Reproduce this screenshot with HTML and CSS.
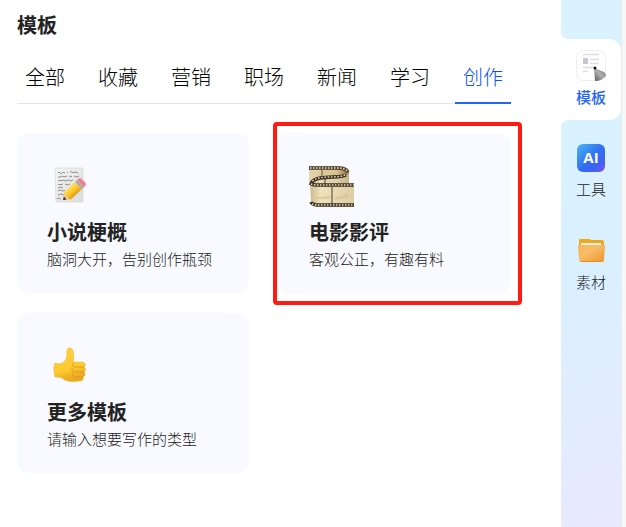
FILE: index.html
```html
<!DOCTYPE html>
<html lang="zh-CN">
<head>
    <meta charset="UTF-8">
    <meta name="viewport" content="width=device-width, initial-scale=1.0">
    <title>模板</title>
    <link rel="stylesheet" href="styles.css">
</head>
<body>
    <main class="panel">
        <h1 class="panel-title">模板</h1>

        <nav class="tabs">
            <button type="button" class="tab">全部</button>
            <button type="button" class="tab">收藏</button>
            <button type="button" class="tab">营销</button>
            <button type="button" class="tab">职场</button>
            <button type="button" class="tab">新闻</button>
            <button type="button" class="tab">学习</button>
            <button type="button" class="tab active">创作</button>
        </nav>

        <div class="card-grid">
            <a href="#novel" class="card">
                <svg class="card-icon" viewBox="0 0 46 46">
                    <defs>
                        <linearGradient id="paper" x1="0" y1="0" x2="1" y2="1">
                            <stop offset="0" stop-color="#f4f4f2"/>
                            <stop offset="1" stop-color="#dcdddd"/>
                        </linearGradient>
                        <linearGradient id="pencil" x1="0" y1="0" x2="0" y2="1">
                            <stop offset="0" stop-color="#ffe05a"/>
                            <stop offset="0.5" stop-color="#fcc62c"/>
                            <stop offset="1" stop-color="#e09a15"/>
                        </linearGradient>
                    </defs>
                    <path d="M8 5h28v34H9z" fill="url(#paper)" stroke="#d3d4d5" stroke-width=".6"/>
                    <g fill="none" stroke="#777" stroke-width=".8">
                        <path d="M11 10q1-2 2 0t3-1l2 1M20 9l1 1M23 9q2-1 3 1l2-1 3 1"/>
                        <path d="M11 14h3l1-1 2 1 3-1M22 14l2-1 1 1M27 13l2 1 3-1"/>
                        <path d="M11 18l2-1 1 1 3-1 1 1 4-1 2 1 2-1"/>
                        <path d="M11 22q1-2 2 0l3-1M18 21l3 1 2-1"/>
                        <path d="M11 25l3-1 2 1M11 28l2-1 3 1 2-1M11 32l3-1 3 1M10 36l2-1 2 1"/>
                    </g>
                    <g transform="translate(16 37) rotate(-43)">
                        <path d="M0 0L6-5V5z" fill="#f2c58c"/>
                        <path d="M0 0l3-2v4z" fill="#333"/>
                        <path d="M6-5h15V5H6l-1-3 1-2-1-2z" fill="url(#pencil)"/>
                        <path d="M21-5h3V5h-3z" fill="#a9adb3"/>
                        <path d="M24-5h1q3 0 3 3v4q0 3-3 3h-1z" fill="#ed7f88"/>
                    </g>
                </svg>
                <h2 class="card-title">小说梗概</h2>
                <p class="card-desc">脑洞大开，告别创作瓶颈</p>
            </a>
            <a href="#movie" class="card highlighted">
                <svg class="card-icon" viewBox="0 0 46 46">
                    <defs>
                        <linearGradient id="film" x1="0" y1="0" x2="1" y2="0">
                            <stop offset="0" stop-color="#cdb98a"/>
                            <stop offset="0.25" stop-color="#efe2be"/>
                            <stop offset="1" stop-color="#decea5"/>
                        </linearGradient>
                        <linearGradient id="filmBack" x1="0" y1="0" x2="1" y2="0">
                            <stop offset="0" stop-color="#e3d5ae"/>
                            <stop offset="0.7" stop-color="#d6c08e"/>
                            <stop offset="1" stop-color="#8f713f"/>
                        </linearGradient>
                    </defs>
                    <!-- far strip -->
                    <path d="M0 3h29c8 0 11 3 11 6v14H4L0 20z" fill="url(#filmBack)"/>
                    <path d="M13 7v8" stroke="#66543a" stroke-width="1"/>
                    <path d="M0 5h28c5 0 9 1 11 4" fill="none" stroke="#4a3c2b" stroke-width="3.500"/>
                    <path d="M1 5h27c5 0 9 1 11 4" fill="none" stroke="#eadfc2" stroke-width="1.6" stroke-dasharray="1.6 1.4"/>
                    <!-- middle fold -->
                    <path d="M38 12c-6 3-16 1-27 3-6 1-9 3-9 6h38V10z" fill="url(#film)" opacity=".7"/>
                    <path d="M16 16v5" stroke="#4d3f29" stroke-width="1"/>
                    <path d="M37 12c-6 3-16 1-26 3-6 1-8 3-9 6" fill="none" stroke="#3b3023" stroke-width="3.500"/>
                    <path d="M36 12c-6 3-16 1-26 3-5 1-7 3-8 5" fill="none" stroke="#e6dabb" stroke-width="1.4" stroke-dasharray="1.6 1.6"/>
                    <!-- near strip -->
                    <path d="M1 20q2 2 8 2h36v22H10q-8 0-8-6z" fill="url(#film)"/>
                    <path d="M7 34q9 0 14-2v4H8zM26 34q8-1 13-4v5l-13 2z" fill="#cdbb90" opacity=".5"/>
                    <path d="M23 24v17" stroke="#4d3f29" stroke-width="1"/>
                    <path d="M1 20q2 2 8 2h36M2 39q1 3 8 3h35" fill="none" stroke="#3b3023" stroke-width="3.500"/>
                    <path d="M2 21q2 1 7 1h36M3 41q2 1 7 1h35" fill="none" stroke="#eadfc2" stroke-width="1.6" stroke-dasharray="1.6 1.4"/>
                </svg>
                <h2 class="card-title">电影影评</h2>
                <p class="card-desc">客观公正，有趣有料</p>
            </a>
            <a href="#more" class="card">
                <svg class="card-icon" viewBox="0 0 46 46">
                    <defs>
                        <linearGradient id="thumb" x1="0" y1="0" x2="0.3" y2="1">
                            <stop offset="0" stop-color="#ffd245"/>
                            <stop offset="0.7" stop-color="#fdc92f"/>
                            <stop offset="1" stop-color="#eba91f"/>
                        </linearGradient>
                    </defs>
                    <path d="M8 20c5 2 9 0 11-4 2-3 0-7 1-9 1-3 5-3 6 1 1 3 1 7 0 11h9c4 0 4 4 2 5 2 1 2 4 0 5 2 2 1 4-1 5 1 3-1 4-4 4-7 1-13 1-17-3-2-1-4-1-7-1-1-4-2-10 0-14z" fill="url(#thumb)" stroke="#edb02a" stroke-width=".5"/>
                    <path d="M37 24h-9c-3 0-3-2-2-4M37 29h-9c-3 0-3-2-3-4M36 34h-8c-2 0-3-2-2-4" fill="none" stroke="#e09a20" stroke-width="1"/>
                </svg>
                <h2 class="card-title">更多模板</h2>
                <p class="card-desc">请输入想要写作的类型</p>
            </a>
        </div>
    </main>

    <aside class="sidebar">
        <a href="#template" class="side-item active">
            <svg class="side-icon" viewBox="0 0 30 30">
                <defs>
                    <linearGradient id="pen" x1="0" y1="1" x2="1" y2="0">
                        <stop offset="0" stop-color="#555"/>
                        <stop offset="0.5" stop-color="#b0b0b0"/>
                        <stop offset="1" stop-color="#666"/>
                    </linearGradient>
                </defs>
                <rect x=".5" y=".5" width="29" height="30" rx="7" fill="#fff" stroke="#eee"/>
                <path d="M7 4.500h16M14 9.500h9M14 13.500h9M7 17.500h11M7 21.500h5" stroke="#dcdde1" stroke-width="1.500"/>
                <path d="M7 8h5v6H7z" fill="#c8c9cf"/>
                <path d="M18 18l10 4q2 2 2 4-4 5-11 5z" fill="url(#pen)"/>
                <circle cx="19" cy="18" r="1.500" fill="#111"/>
            </svg>
            <span class="side-label">模板</span>
        </a>
        <a href="#tools" class="side-item">
            <svg class="side-icon" viewBox="0 0 30 30">
                <defs>
                    <linearGradient id="ai" x1="0" y1="0" x2="1" y2="1">
                        <stop offset="0" stop-color="#48b9ee"/>
                        <stop offset="0.5" stop-color="#316ff3"/>
                        <stop offset="0.75" stop-color="#3d61f3"/>
                        <stop offset="1" stop-color="#8551ef"/>
                    </linearGradient>
                </defs>
                <rect x="1" y="1" width="28" height="28" rx="6" fill="url(#ai)"/>
                <text class="ai-text" x="15" y="20" text-anchor="middle">AI</text>
            </svg>
            <span class="side-label">工具</span>
        </a>
        <a href="#materials" class="side-item">
            <svg class="side-icon" viewBox="0 0 30 30">
                <defs>
                    <linearGradient id="folder" x1="0" y1="0" x2="1" y2="1">
                        <stop offset="0" stop-color="#f5b757"/>
                        <stop offset="0.4" stop-color="#f7bd68"/>
                        <stop offset="1" stop-color="#ee9428"/>
                    </linearGradient>
                </defs>
                <path d="M3 4q0-1 1-1h9q1 0 2 1h11q2 0 2 2v8H3z" fill="#efaa13"/>
                <path d="M5 7h20v6H5z" fill="#f7f7f7"/>
                <path d="M5 8h19" stroke="#dce2e8"/>
                <path d="M2 9h26q1 0 1 1l-1 14q0 2-2 2H5q-2 0-2-2L2 10z" fill="url(#folder)"/>
                <path d="M5 25.500h20" stroke="#e58e20"/>
            </svg>
            <span class="side-label">素材</span>
        </a>
    </aside>
</body>
</html>
```

FILE: styles.css
```css
:root {
    --primary-color: #1f66ff;
    --mark-color: #ff1a12;
    --card-color: #f9faff;
    --text-color: #222;
}

* {
    box-sizing: border-box;
    margin: 0;
    padding: 0;
}

body {
    display: flex;
    min-height: 100vh;
    font-family: 'Noto Sans CJK SC', sans-serif;
    background-color: white;
    color: var(--text-color);
}

a {
    color: inherit;
    text-decoration: none;
}

.panel {
    flex: 1;
    padding: 10px 50px 20px 17px;
}

.panel-title {
    font-size: 20px;
    line-height: 30px;
    font-weight: 700;
}

.tabs {
    display: flex;
    justify-content: space-between;
    margin-top: 10px;
    border-bottom: 1px solid #e3e5eb;
}

.tab {
    height: 54px;
    padding: 0 8px;
    margin-bottom: -1px;
    border: none;
    border-bottom: 2px solid transparent;
    background: none;
    font-family: inherit;
    font-size: 20px;
    font-weight: 300;
    color: #000;
    cursor: pointer;
}

.tab.active {
    color: #0a50ff;
    border-bottom-color: var(--primary-color);
}

.card-grid {
    display: grid;
    grid-template-columns: 1fr 1fr;
    gap: 20px 30px;
    margin-top: 29px;
}

.card {
    position: relative;
    height: 160px;
    padding: 30px;
    border-radius: 12px;
    background-color: var(--card-color);
}

.card-icon {
    display: block;
    width: 46px;
    height: 46px;
}

.card-title {
    margin-top: 8px;
    font-size: 20px;
    line-height: 30px;
    font-weight: 700;
}

.card-desc {
    font-size: 15px;
    line-height: 24px;
    font-weight: 300;
    color: #222;
    white-space: nowrap;
}

/* red frame around the marked card */
.card.highlighted::after {
    content: '';
    position: absolute;
    inset: -11px -11px -12px -6px;
    border: 4px solid var(--mark-color);
    border-radius: 4px;
}

.sidebar {
    display: flex;
    flex-direction: column;
    gap: 12px;
    width: 65px;
    padding-top: 39px;
    border-right: 4px solid #f7f7f7;
    background: linear-gradient(160deg, #daf2ff 0%, #daf0ff 50%, #e9e9ff 100%);
    box-shadow: inset -1px 0 #e6ebf0;
}

.side-item {
    position: relative;
    display: flex;
    flex-direction: column;
    align-items: center;
    height: 81px;
    margin-right: 1px;
    padding-top: 11px;
}

.side-item.active {
    border-radius: 0 12px 12px 0;
    background-color: white;
    color: var(--primary-color);
}

/* rounded cut-outs where the active item joins the panel */
.side-item.active::before,
.side-item.active::after {
    content: '';
    position: absolute;
    left: 0;
    width: 8px;
    height: 8px;
}

.side-item.active::before {
    bottom: 100%;
    background: radial-gradient(circle at 100% 0, transparent 8px, white 8px);
}

.side-item.active::after {
    top: 100%;
    background: radial-gradient(circle at 100% 100%, transparent 8px, white 8px);
}

.side-icon {
    width: 30px;
    height: 30px;
    overflow: visible;
}

.side-label {
    margin-top: 5px;
    font-size: 15px;
    line-height: 22px;
    font-weight: 300;
}

.side-item.active .side-label {
    margin-top: 6px;
    font-weight: 500;
}

.ai-text {
    font-family: 'Open Sans', sans-serif;
    font-size: 15px;
    font-weight: 700;
    fill: white;
}
```
